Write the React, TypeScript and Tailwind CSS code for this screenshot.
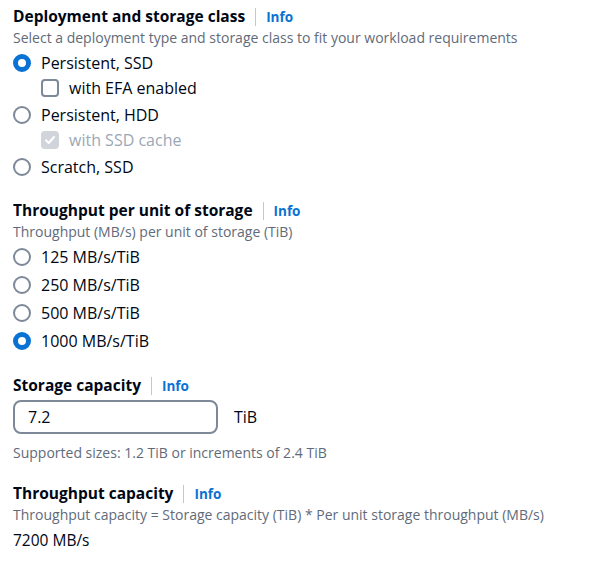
import React from "react";

const font = { fontFamily: '"Open Sans", "Noto Sans", sans-serif' };

function Radio({ checked, label }: { checked?: boolean; label: string }) {
  return (
    <div className="flex items-center h-[28px]">
      <span
        className={
          checked
            ? "box-border w-[18px] h-[18px] rounded-full border-[5px] border-[#0972d3] bg-white ml-[13px]"
            : "box-border w-[18px] h-[18px] rounded-full border-2 border-[#7d8998] bg-white ml-[13px]"
        }
      />
      <span className="ml-[10px] text-[16px] text-[#000716]">{label}</span>
    </div>
  );
}

function Check({ checked, disabled, label }: { checked?: boolean; disabled?: boolean; label: string }) {
  return (
    <div className="flex items-center h-[24px] pb-[2px] box-border pl-[41px]">
      {checked ? (
        <span className="w-[18px] h-[18px] rounded-[4px] bg-[#d1d5db] flex items-center justify-center">
          <svg width="12" height="12" viewBox="0 0 12 12">
            <path d="M2 6.2 L4.8 9 L10 3" fill="none" stroke="white" strokeWidth="2" strokeLinecap="round" strokeLinejoin="round" />
          </svg>
        </span>
      ) : (
        <span className="box-border w-[18px] h-[18px] rounded-[4px] border-2 border-[#7d8998] bg-white" />
      )}
      <span className={"ml-[10px] text-[16px] " + (disabled ? "text-[#9ba7b6]" : "text-[#000716]")}>{label}</span>
    </div>
  );
}

function Header({ title, sub }: { title: string; sub?: string }) {
  return (
    <div>
      <div className="flex items-center h-[24px]">
        <span className="text-[15.5px] font-bold text-[#000716]">{title}</span>
        <span className="w-px h-[18px] bg-[#c6c6cd] mx-[10px]" />
        <span className="text-[13.5px] font-bold text-[#0972d3]">Info</span>
      </div>
      {sub && <div className="text-[14px] text-[#5f6b7a] leading-[18px]">{sub}</div>}
    </div>
  );
}

export default function App() {
  return (
    <div className="w-[610px] h-[561px] bg-white pl-[13px] pt-[5px] box-border" style={font}>
      <Header title="Deployment and storage class" sub="Select a deployment type and storage class to fit your workload requirements" />
      <div className="-ml-[13px] mt-[2px]">
        <Radio checked label="Persistent, SSD" />
        <Check label="with EFA enabled" />
        <Radio label="Persistent, HDD" />
        <Check checked disabled label="with SSD cache" />
        <Radio label="Scratch, SSD" />
      </div>
      <div className="mt-[18px]">
        <Header title="Throughput per unit of storage" sub="Throughput (MB/s) per unit of storage (TiB)" />
      </div>
      <div className="-ml-[13px] mt-[2px]">
        <Radio label="125 MB/s/TiB" />
        <Radio label="250 MB/s/TiB" />
        <Radio label="500 MB/s/TiB" />
        <Radio checked label="1000 MB/s/TiB" />
      </div>
      <div className="mt-[19px]">
        <Header title="Storage capacity" />
      </div>
      <div className="flex items-center mt-[2px]">
        <div className="box-border w-[205px] h-[34px] border-2 border-[#7d8998] rounded-[8px] flex items-center pl-[13px] text-[16px] text-[#000716]">
          7.2
        </div>
        <span className="ml-[16px] text-[16px] text-[#000716]">TiB</span>
      </div>
      <div className="text-[14px] text-[#5f6b7a] mt-[10px] leading-[18px]">Supported sizes: 1.2 TiB or increments of 2.4 TiB</div>
      <div className="mt-[20px]">
        <Header title="Throughput capacity" sub="Throughput capacity = Storage capacity (TiB) * Per unit storage throughput (MB/s)" />
      </div>
      <div className="text-[15.5px] text-[#000716] mt-[5px]">7200 MB/s</div>
    </div>
  );
}
